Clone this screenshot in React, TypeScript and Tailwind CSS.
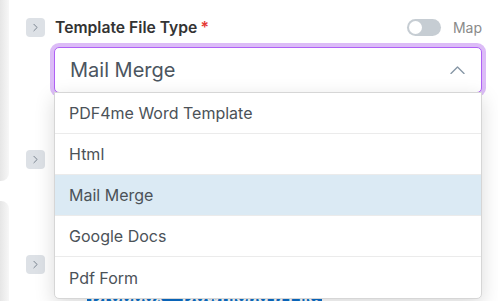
import { ChevronRight } from 'lucide-react';

const OPTIONS = ['PDF4me Word Template', 'Html', 'Mail Merge', 'Google Docs', 'Pdf Form'];

function ExpandButton() {
  return (
    <button className="w-[19px] h-[19px] shrink-0 rounded-[4px] bg-[#dde1e6] flex items-center justify-center">
      <ChevronRight className="w-[13px] h-[13px] text-[#717c88]" strokeWidth={1.7} />
    </button>
  );
}

export default function App() {
  const selected = 'Mail Merge';

  return (
    <div
      className="relative w-[498px] h-[301px] overflow-hidden bg-white"
      style={{ fontFamily: 'Inter, "Noto Sans", sans-serif' }}
    >
      {/* left panel edge */}
      <div className="absolute left-0 top-0 w-[9px] h-[181px] rounded-br-[8px] bg-gradient-to-r from-[#e6e6e6] to-[#f7f7f7]" />
      <div className="absolute left-0 top-[201px] w-[9px] h-[100px] rounded-tr-[8px] bg-gradient-to-r from-[#e6e6e6] to-[#f7f7f7]" />

      <div className="relative pl-[26px] pr-[16px] pt-[18px]">
        {/* Template File Type */}
        <div className="flex items-start gap-[9px]">
          <ExpandButton />
          <div className="flex-1 min-w-0">
            <div className="flex items-center justify-between h-[19px]">
              <span className="text-[15.7px] font-semibold text-[#333333] leading-none pl-[1px]">
                Template File Type<span className="text-[#e53935] ml-[3px]">*</span>
              </span>
              <div className="flex items-center gap-[12px]">
                <div className="w-[34px] h-[17px] rounded-full bg-[#c6cdd3] flex items-center px-[2px]">
                  <div className="w-[13px] h-[13px] rounded-full bg-white" />
                </div>
                <span className="text-[14px] text-[#8a8a8a] leading-none">Map</span>
              </div>
            </div>

            <div className="relative mt-[10px]">
              <div className="h-[46px] rounded-[5px] border border-[#b061f5] ring-[4px] ring-[#dcbcf7] bg-white flex items-center justify-between pl-[15px] pr-[15px]">
                <span className="text-[20px] text-[#4b5560] leading-none">{selected}</span>
                <svg width="15" height="8" viewBox="0 0 15 8" fill="none" className="mr-[1px]">
                  <polyline points="1,7.5 7.5,1 14,7.5" stroke="#8797a6" strokeWidth="1.4" strokeLinejoin="round" strokeLinecap="round" />
                </svg>
              </div>

              {/* options */}
              <ul className="absolute z-10 left-0 right-0 top-[45px] bg-white border border-[#d6d6d6] rounded-b-[5px] shadow-[0_6px_20px_rgba(0,0,0,0.15)]">
                {OPTIONS.map((opt, i) => (
                  <li
                    key={opt}
                    className={`h-[41px] flex items-center pl-[14px] text-[16px] text-[#4b5258] ${
                      i < OPTIONS.length - 1 ? 'border-b border-[#ebebeb]' : ''
                    } ${opt === selected ? 'bg-[#dbeaf4]' : ''}`}
                  >
                    {opt}
                  </li>
                ))}
              </ul>
            </div>
          </div>
        </div>

        {/* rows behind the menu */}
        <div className="flex items-start gap-[9px] mt-[57px]">
          <ExpandButton />
          <span className="text-[15px] font-semibold text-[#333333]">Template File</span>
        </div>

        <div className="flex items-start gap-[9px] mt-[82px]">
          <ExpandButton />
          <div className="flex-1 pt-[30px] pl-[33px]">
            <span className="inline-block bg-[#0b6fcc] text-white text-[18px] font-semibold px-[3px] leading-[24px]">
              Dropbox - Download a File
            </span>
          </div>
        </div>
      </div>
    </div>
  );
}
